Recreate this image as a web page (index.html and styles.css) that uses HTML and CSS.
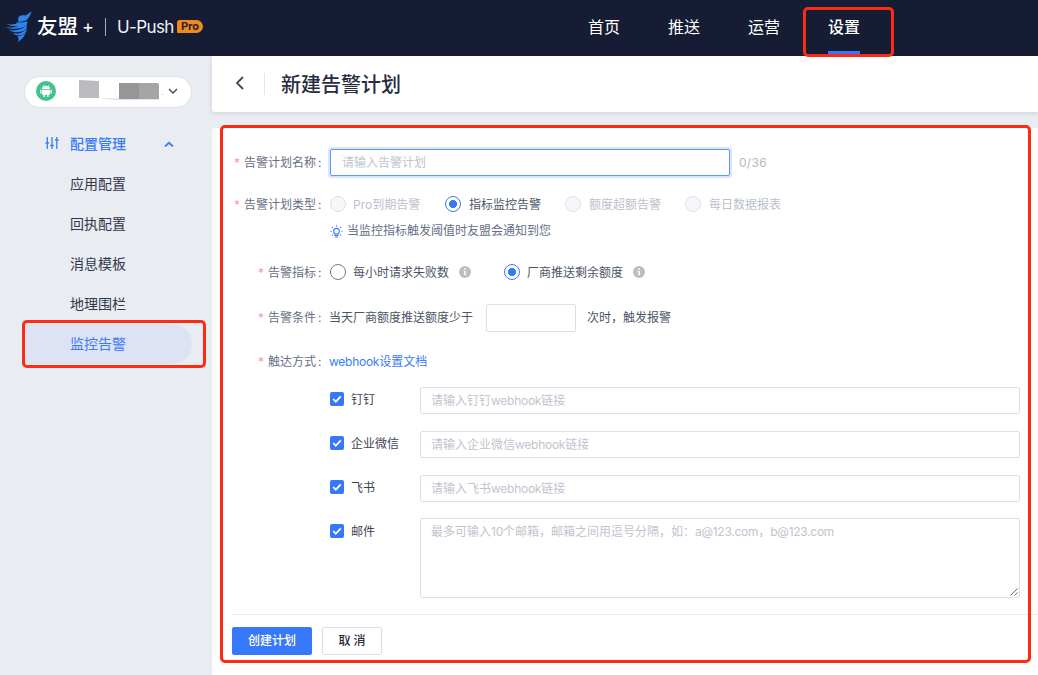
FILE: index.html
```html
<!DOCTYPE html>
<html lang="zh-CN">
<head>
<meta charset="utf-8">
<title>新建告警计划</title>
<link rel="stylesheet" href="styles.css">
</head>
<body>
<header class="topbar">
  <div class="brand">
    <svg class="bird" viewBox="15 32 81 96" width="27" height="32" fill="#2a86ea">
      <path d="M95 33C91 46 86 54 80 60L58 66C53 62 53 52 58 48C65 43 73 46 78 45Z"/>
      <path d="M52 65C60 68 73 66 82 63C83 71 80 75 76 78C64 85 38 89 16 81C30 83 45 81 55 77C42 79 29 77 20 71C34 74 49 73 52 65Z"/>
      <path d="M81 75C81 82 79 86 75 90C61 98 40 98 27 89C48 93 66 87 81 75Z"/>
      <path d="M80 85C80 92 78 96 75 99C65 108 49 108 38 99C55 102 69 97 80 85Z"/>
      <path d="M77 96C74 108 67 116 54 126C57 119 56 113 52 108C63 108 71 104 77 96Z"/>
    </svg>
    <span class="brand-name">友盟</span><span class="brand-plus">+</span>
    <i class="brand-line"></i>
    <span class="product">U-Push</span>
    <span class="pro">Pro</span>
  </div>
  <nav class="nav">
    <a>首页</a><a>推送</a><a>运营</a><a class="active">设置</a>
  </nav>
</header>
<div class="layout">
  <aside class="sidebar">
    <div class="app-select">
      <svg width="20" height="20" viewBox="0 0 20 20"><circle cx="10" cy="10" r="10" fill="#42c38d"/><g fill="#fff"><path d="M6 8.1a4 3.3 0 0 1 8 0z"/><rect x="6" y="8.7" width="8" height="5.2" rx=".8"/><rect x="4.2" y="8.4" width="1.3" height="4.2" rx=".6"/><rect x="14.5" y="8.4" width="1.3" height="4.2" rx=".6"/><rect x="7.4" y="13" width="1.5" height="3" rx=".6"/><rect x="11.1" y="13" width="1.5" height="3" rx=".6"/></g><path d="M7.2 4l1 1.5M12.8 4l-1 1.5" stroke="#fff" stroke-width=".6"/><circle cx="8.3" cy="6.8" r=".4" fill="#42c38d"/><circle cx="11.7" cy="6.8" r=".4" fill="#42c38d"/></svg>
      <svg class="mask" width="86" height="24" viewBox="0 0 86 24"><path d="M0 1l20 1v17L0 19z" fill="#bbbbbd"/><path d="M20 19l20 .5h40v1.2l-44 .3z" fill="#e1e0e8"/><path d="M40 4h20v16H40z" fill="#969698"/><path d="M60 4h18l2 1v15H60z" fill="#a5a5a5"/><circle cx="83.5" cy="15.5" r=".6" fill="#bbb"/></svg>
      <svg width="10" height="6" viewBox="0 0 10 6" fill="none" stroke="#3c4257" stroke-width="1.3"><path d="M1 1l4 4 4-4"/></svg>
    </div>
    <div class="menu-head">
      <svg class="sliders" width="14" height="14" viewBox="0 0 14 14" stroke="#3b7bf8" stroke-width="1.3" fill="none"><path d="M2.3 1v12M7 1v12M11.8 1v12M.5 7h3.6M5.2 9.5h3.6M10 4h3.6"/></svg>
      <span>配置管理</span>
      <svg class="caret" width="10" height="6" viewBox="0 0 10 6" fill="none" stroke="#3b7bf8" stroke-width="1.8"><path d="M1 5.4l4-3.6 4 3.6"/></svg>
    </div>
    <a class="item">应用配置</a>
    <a class="item">回执配置</a>
    <a class="item">消息模板</a>
    <a class="item">地理围栏</a>
    <a class="item current">监控告警</a>
  </aside>
  <main class="main">
    <div class="page-head">
      <svg class="back" width="10" height="14" viewBox="0 0 10 14" fill="none" stroke="#3f4a5c" stroke-width="1.8"><path d="M8 1L2 7l6 6"/></svg>
      <i class="head-line"></i>
      <h1>新建告警计划</h1>
    </div>
    <form class="card">
      <div class="row name-row">
        <label class="label"><b>*</b>告警计划名称<em>:</em></label>
        <div class="input focus">请输入告警计划</div><span class="count">0/36</span>
      </div>
      <div class="row type-row">
        <label class="label"><b>*</b>告警计划类型<em>:</em></label>
        <span class="option disabled w115"><i class="radio"></i><span>Pro到期告警</span></span>
        <span class="option w120"><i class="radio on"></i><span>指标监控告警</span></span>
        <span class="option disabled w120"><i class="radio"></i><span>额度超额告警</span></span>
        <span class="option disabled"><i class="radio"></i><span>每日数据报表</span></span>
      </div>
      <div class="hint">
        <svg width="13" height="13" viewBox="0 0 13 13" fill="none" stroke="#3b7bf8" stroke-width="1.1"><circle cx="6.5" cy="6.2" r="2.8"/><path d="M5 9.5v1h3v-1M5 12h3M6.5.3v1.2M.4 6.2h1.2M11.4 6.2h1.2M2 2l.9.9M11 2l-.9.9M2 10.4l.9-.9M11 10.4l-.9-.9"/></svg>
        当监控指标触发阈值时友盟会通知到您
      </div>
      <div class="row metric-row">
        <label class="label"><b>*</b>告警指标<em>:</em></label>
        <span class="option w174"><i class="radio"></i><span>每小时请求失败数</span><svg class="info" width="12" height="12" viewBox="0 0 12 12"><circle cx="6" cy="6" r="6" fill="#b9bfca"/><path d="M5.2 2.6h1.6v1.5H5.2zM4.7 5h2.1v4.3H5.3V5.8h-.6z" fill="#fff"/></svg></span>
        <span class="option"><i class="radio on"></i><span>厂商推送剩余额度</span><svg class="info" width="12" height="12" viewBox="0 0 12 12"><circle cx="6" cy="6" r="6" fill="#b9bfca"/><path d="M5.2 2.6h1.6v1.5H5.2zM4.7 5h2.1v4.3H5.3V5.8h-.6z" fill="#fff"/></svg></span>
      </div>
      <div class="row cond-row">
        <label class="label"><b>*</b>告警条件<em>:</em></label>
        <span class="cond-text">当天厂商额度推送额度少于</span><div class="input small"></div><span>次时，触发报警</span>
      </div>
      <div class="row reach-row">
        <label class="label"><b>*</b>触达方式<em>:</em></label>
        <a class="link"><span class="latin">webhook</span>设置文档</a>
      </div>
      <div class="channels">
        <span class="check"><svg width="14" height="14" viewBox="0 0 14 14"><rect width="14" height="14" rx="2" fill="#3778fb"/><path d="M3.2 7l2.6 2.7L10.8 4.4" fill="none" stroke="#fff" stroke-width="1.8"/></svg>钉钉</span>
        <div class="input">请输入钉钉<span class="latin">webhook</span>链接</div>
        <span class="check"><svg width="14" height="14" viewBox="0 0 14 14"><rect width="14" height="14" rx="2" fill="#3778fb"/><path d="M3.2 7l2.6 2.7L10.8 4.4" fill="none" stroke="#fff" stroke-width="1.8"/></svg>企业微信</span>
        <div class="input">请输入企业微信<span class="latin">webhook</span>链接</div>
        <span class="check"><svg width="14" height="14" viewBox="0 0 14 14"><rect width="14" height="14" rx="2" fill="#3778fb"/><path d="M3.2 7l2.6 2.7L10.8 4.4" fill="none" stroke="#fff" stroke-width="1.8"/></svg>飞书</span>
        <div class="input">请输入飞书<span class="latin">webhook</span>链接</div>
        <span class="check last"><svg width="14" height="14" viewBox="0 0 14 14"><rect width="14" height="14" rx="2" fill="#3778fb"/><path d="M3.2 7l2.6 2.7L10.8 4.4" fill="none" stroke="#fff" stroke-width="1.8"/></svg>邮件</span>
        <div class="input area">最多可输入<span class="latin">10</span>个邮箱，邮箱之间用逗号分隔，如：<span class="latin">a@123.com</span>，<span class="latin">b@123.com</span><svg class="grip" width="8" height="8" viewBox="0 0 8 8" stroke="#555" stroke-width=".9"><path d="M.5 7.5l7-7M4.5 7.5l3-3"/></svg></div>
      </div>
      <div class="actions">
        <button class="btn primary" type="button">创建计划</button>
        <button class="btn" type="button">取 消</button>
      </div>
    </form>
  </main>
</div>
<div class="mark mark-nav"></div>
<div class="mark mark-side"></div>
<div class="mark mark-form"></div>
</body>
</html>
```

FILE: styles.css
```css
* { box-sizing: border-box; }
body {
  margin: 0;
  width: 1038px;
  height: 675px;
  overflow: hidden;
  position: relative;
  background: #e9ecf1;
  font: 12px/20px Inter, "Noto Sans CJK SC", sans-serif;
  color: #4b5567;
}
svg { display: block; flex: none; }
i, em { font-style: normal; }

.topbar { height: 56px; background: #151c34; display: flex; color: #fff; }
.brand { width: 572px; display: flex; align-items: center; padding: 0 0 3px 5px; }
.brand-name { font-size: 20.5px; font-weight: 500; line-height: 30px; margin-left: 5px; width: 42px; }
.brand-plus { font-size: 18px; line-height: 24px; width: 14px; margin-left: 3px; }
.brand-line { width: 1px; height: 18px; background: #a7abb7; margin: 0 11px 0 9px; }
.product { font-size: 17px; font-weight: 400; width: 55px; white-space: nowrap; letter-spacing: -.6px; color: #eef0f5; }
.pro { width: 26px; height: 13px; margin-left: 5px; border-radius: 3px 7px 7px 1px; background: #f08a20; color: #2b2230; font-size: 11px; font-weight: 700; line-height: 13px; text-align: center; }
.nav { display: flex; }
.nav a { width: 80px; padding: 0 16px; font-size: 16px; line-height: 54px; white-space: nowrap; position: relative; }
.nav .active { font-weight: 500; }
.nav .active::after { content: ""; position: absolute; left: 16px; bottom: 2px; width: 32px; height: 3px; background: #3778fb; }

.layout { display: flex; height: 619px; }
.sidebar { width: 212px; flex: none; padding: 20px 20px 0 24px; }
.app-select { height: 32px; border: 1px solid #dfe2e8; border-radius: 16px; background: #fff; display: flex; align-items: center; padding: 0 14px 2px 11px; }
.mask { margin: 0 3px 0 23px; }
.menu-head { height: 40px; margin-top: 16px; display: flex; align-items: center; padding-left: 21px; gap: 11px; font-size: 14px; font-weight: 500; color: #3b7bf8; }
.sliders { margin-bottom: 2px; }
.caret { margin-left: 27px; }
.item { display: block; height: 40px; padding-left: 46px; font-size: 14px; line-height: 40px; color: #32384b; }
.current { color: #3b7bf8; background: #dde3f4; border-radius: 0 20px 20px 0; }

.main { flex: 1; display: flex; flex-direction: column; gap: 16px; }
.page-head { height: 56px; flex: none; background: #fff; border-radius: 0 0 0 3px; box-shadow: 0 1px 4px rgba(60, 70, 100, .16); display: flex; align-items: center; padding-left: 23px; }
.back { margin-bottom: 2px; }
.head-line { width: 1px; height: 22px; background: #e3e6eb; margin: 0 16px 0 19px; }
h1 { margin: 0; padding-top: 2px; font-size: 20px; font-weight: 500; line-height: 30px; color: #272d40; }

.card { flex: 1; background: #fff; border-radius: 3px 0 0 0; padding-top: 21px; }
.row { display: flex; align-items: center; height: 28px; }
.name-row { height: 27px; }
.label { width: 118px; flex: none; display: flex; justify-content: flex-end; padding-right: 9px; color: #667085; }
.label b { color: #f79a9a; font-weight: 400; margin-right: 4px; }
.label em { width: 5px; padding-left: 2px; }
.input { height: 27px; border: 1px solid #dcdfe6; border-radius: 2px; padding: 0 10px; line-height: 26px; color: #bfc4ce; background: #fff; }
.focus { width: 400px; padding-left: 11px; border-color: #5c97fa; box-shadow: 0 0 0 2px #d9e5fd; }
.count { margin-left: 9px; color: #b4bac5; letter-spacing: .3px; }
.type-row { margin-top: 14px; }
.type-row .label, .type-row .option span, .metric-row .label, .metric-row .option span { padding-top: 2px; }
.option { display: flex; align-items: center; white-space: nowrap; }
.disabled { color: #bcc1cb; }
.w115 { width: 115px; }
.w120 { width: 120px; }
.w174 { width: 174px; }
.radio { width: 16px; height: 16px; margin-right: 7px; border: 1px solid #737b8a; border-radius: 50%; flex: none; background: #fff; }
.type-row .option span { padding-left: 1px; }
.type-row .disabled:nth-of-type(1) span { padding-left: 0; }
.disabled .radio { border-color: #dde0e7; background: #f6f7fa; }
.on { border-color: #3778fb; background: radial-gradient(circle, #3778fb 3.7px, #fff 4.3px); }
.info { margin-left: 10px; }
.hint { display: flex; align-items: center; gap: 4px; height: 20px; margin: 3px 0 0 118px; color: #667085; }
.metric-row { margin-top: 17px; }
.cond-row { margin-top: 18px; }
.cond-text { margin-left: -1px; }
.small { width: 90px; height: 28px; margin: 0 11px 0 13px; }
.reach-row { margin-top: 16px; }
.link { color: #3b7bf8; margin-left: -1px; }
.latin { letter-spacing: -.27px; }
.channels { display: grid; grid-template-columns: 90px 600px; grid-template-rows: 27px 27px 26px 80px; row-gap: 17px; margin: 11px 0 0 118px; }
.check { display: flex; align-items: center; height: 25px; gap: 7px; color: #3d4354; }
.check svg { margin-bottom: 1px; }
.last { height: 27px; }
.area { height: 80px; position: relative; }
.grip { position: absolute; right: 1px; bottom: 1px; }
.actions { margin: 16px 0 0 20px; border-top: 1px solid #ebedf0; padding-top: 12px; display: flex; gap: 10px; }
.btn { width: 60px; height: 28px; padding: 0; border: 1px solid #dcdfe6; border-radius: 2px; background: #fff; font: 500 12px/26px Inter, "Noto Sans CJK SC", sans-serif; color: #272d40; }
.primary { width: 80px; background: #3778fb; border-color: #3778fb; color: #fff; }

/* Red annotation frames laid over the page */
.mark { position: absolute; border: 3px solid #fc2b16; border-radius: 5px; }
.mark-nav { left: 803px; top: 7px; width: 91px; height: 50px; }
.mark-side { left: 22px; top: 320px; width: 184px; height: 48px; }
.mark-form { left: 220px; top: 125px; width: 811px; height: 538px; }
```
